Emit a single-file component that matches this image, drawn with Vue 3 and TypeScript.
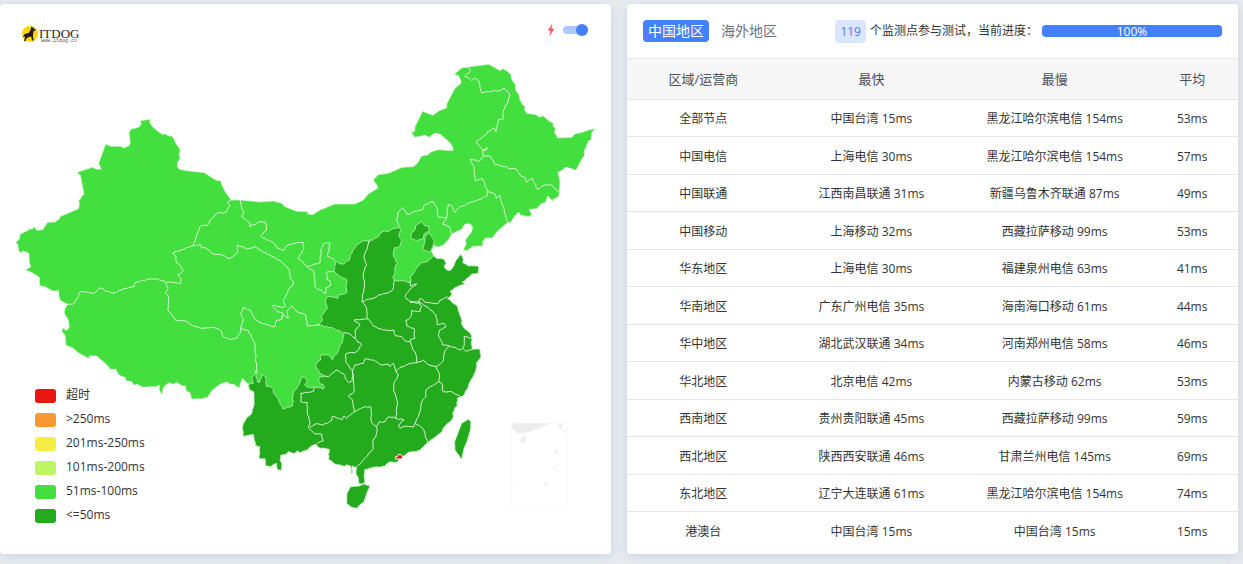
<script setup lang="ts">
import { ref } from 'vue'

interface ResultRow {
  region: string
  fastest: string
  slowest: string
  average: string
}

const autoRefresh = ref(true)
const scope = ref<'cn' | 'intl'>('cn')
const nodeCount = 119
const progress = 100

const legend = [
  { label: '超时', tone: 'timeout' },
  { label: '>250ms', tone: 'slowest' },
  { label: '201ms-250ms', tone: 'slow' },
  { label: '101ms-200ms', tone: 'medium' },
  { label: '51ms-100ms', tone: 'fast' },
  { label: '<=50ms', tone: 'fastest' },
]

const rows: ResultRow[] = [
  { region: '全部节点', fastest: '中国台湾 15ms', slowest: '黑龙江哈尔滨电信 154ms', average: '53ms' },
  { region: '中国电信', fastest: '上海电信 30ms', slowest: '黑龙江哈尔滨电信 154ms', average: '57ms' },
  { region: '中国联通', fastest: '江西南昌联通 31ms', slowest: '新疆乌鲁木齐联通 87ms', average: '49ms' },
  { region: '中国移动', fastest: '上海移动 32ms', slowest: '西藏拉萨移动 99ms', average: '53ms' },
  { region: '华东地区', fastest: '上海电信 30ms', slowest: '福建泉州电信 63ms', average: '41ms' },
  { region: '华南地区', fastest: '广东广州电信 35ms', slowest: '海南海口移动 61ms', average: '44ms' },
  { region: '华中地区', fastest: '湖北武汉联通 34ms', slowest: '河南郑州电信 58ms', average: '46ms' },
  { region: '华北地区', fastest: '北京电信 42ms', slowest: '内蒙古移动 62ms', average: '53ms' },
  { region: '西南地区', fastest: '贵州贵阳联通 45ms', slowest: '西藏拉萨移动 99ms', average: '59ms' },
  { region: '西北地区', fastest: '陕西西安联通 46ms', slowest: '甘肃兰州电信 145ms', average: '69ms' },
  { region: '东北地区', fastest: '辽宁大连联通 61ms', slowest: '黑龙江哈尔滨电信 154ms', average: '74ms' },
  { region: '港澳台', fastest: '中国台湾 15ms', slowest: '中国台湾 15ms', average: '15ms' },
]

// Outer boundary, clockwise from the south-west of Tibet to the Bohai coast.
const northBoundary =
  '742,1150 727,1135 722,1150 718,1165 700,1152 692,1153 680,1146 660,1153 635,1172 623,1192 605,1196 575,1197 570,1178 558,1172 557,1158 545,1157 530,1147 520,1153 506,1148 490,1162 486,1184 478,1170 479,1155 468,1160 450,1160 430,1162 410,1152 402,1156 395,1145 378,1142 376,1132 366,1130 354,1122 348,1108 332,1108 320,1094 290,1068 270,1067 265,1075 235,1058 220,1045 198,1036 195,1005 186,995 188,983 200,992 208,982 205,960 193,940 195,925 203,913 182,902 177,890 176,872 158,873 135,860 119,857 118,832 108,826 100,820 84,813 76,810 93,800 88,790 87,760 70,753 62,758 56,752 54,735 48,727 58,718 60,703 88,689 85,685 95,688 104,681 110,691 128,689 143,667 165,666 178,657 180,650 236,626 238,612 236,603 245,592 245,588 252,583 242,530 242,527 231,517 278,502 289,508 304,507 296,490 317,433 333,439 362,439 371,444 387,437 391,430 387,397 394,387 416,382 424,372 421,362 451,358 449,366 457,380 475,395 487,403 499,402 504,408 514,408 522,416 528,431 539,446 541,455 537,463 541,474 533,487 532,500 539,508 560,512 613,518 648,541 663,543 664,551 676,576 693,600 720,600 780,606 820,603 845,610 855,620 890,634 922,635 924,642 938,644 960,630 1005,612 1065,612 1090,600 1105,582 1134,564 1130,554 1120,540 1135,524 1165,520 1200,505 1208,502 1240,500 1252,490 1264,469 1285,464 1292,456 1315,449 1358,452 1360,447 1352,430 1320,402 1303,400 1288,412 1275,406 1245,412 1234,398 1244,394 1245,380 1268,334 1298,346 1320,331 1340,324 1341,310 1365,265 1383,250 1383,243 1376,227 1363,223 1385,204 1405,201 1467,193 1500,212 1507,206 1520,212 1532,223 1536,240 1546,254 1547,270 1558,287 1560,300 1568,315 1575,318 1574,330 1580,340 1608,344 1618,352 1629,347 1647,363 1660,370 1659,378 1666,386 1664,397 1673,414 1716,412 1724,402 1750,396 1765,390 1787,386 1776,396 1774,418 1765,424 1752,456 1754,466 1746,476 1728,511 1698,501 1687,510 1674,517 1680,545 1678,580 1676,590 1658,599 1660,606 1650,595 1643,588 1636,608 1625,610 1610,626 1587,628 1595,642 1590,650 1562,646 1556,636 1545,647 1533,666 1522,668 1490,696 1477,714 1456,714 1448,725 1449,738 1420,739 1400,752 1390,750 1394,742 1399,732 1396,720 1415,695 1418,680 1410,671 1394,673 1385,688 1355,702 1345,720 1330,735 1315,741 1302,737 1295,753'

// Coast and southern border, from the Yellow River delta round to Yunnan.
const southBoundary =
  '1301,768 1312,776 1332,778 1338,790 1332,800 1345,812 1353,810 1365,788 1382,764 1390,778 1388,788 1405,798 1432,798 1436,802 1434,820 1415,822 1405,832 1386,846 1395,852 1380,856 1350,874 1356,882 1342,896 1370,916 1378,940 1388,978 1402,992 1414,1006 1416,1048 1440,1048 1443,1070 1428,1092 1431,1098 1424,1118 1418,1132 1410,1145 1405,1160 1388,1188 1372,1194 1370,1210 1372,1216 1364,1224 1358,1238 1360,1250 1355,1260 1340,1272 1320,1300 1300,1315 1282,1330 1265,1344 1260,1350 1225,1357 1205,1370 1190,1387 1170,1385 1155,1398 1115,1403 1094,1408 1092,1425 1094,1448 1078,1452 1076,1438 1068,1422 1070,1402 1056,1398 1056,1420 1053,1420 1052,1398 1040,1394 1033,1399 1006,1393 986,1378 988,1348 955,1342 948,1332 930,1340 922,1350 912,1352 900,1358 893,1352 883,1360 865,1354 860,1362 842,1366 840,1380 846,1392 845,1410 833,1410 830,1390 812,1400 798,1398 795,1376 777,1375 780,1340 766,1335 760,1303 730,1310 728,1280 738,1258 756,1238 761,1220 761,1175 750,1170 746,1152'

// Northern edge of the fast provinces, from Shandong west and down to Yunnan.
const fastEdge =
  '1282,785 1260,792 1245,812 1230,830 1232,848 1200,842 1183,840 1178,832 1185,815 1188,795 1192,790 1180,760 1184,743 1200,738 1205,720 1196,705 1203,690 1196,682 1170,692 1142,698 1136,710 1118,722 1110,718 1108,728 1094,722 1085,723 1072,732 1050,765 1048,780 1030,792 1005,784 1002,814 1040,838 1040,878 1017,885 1013,896 982,890 976,902 982,925 970,942 964,946 968,960 950,974 995,982 1032,1000 1028,1025 1018,1045 1006,1065 998,1080 985,1065 960,1067 962,1080 947,1095 958,1118 975,1128 960,1130 956,1145 974,1162 968,1168 945,1160 920,1160 914,1155 922,1140 905,1130 900,1145 880,1180 877,1218 850,1228 840,1210 815,1162 800,1160 798,1135 785,1123 778,1148 771,1145 768,1110 756,1138 760,1150'

function roughen(points: string, strength: number): string {
  const source = points.split(' ').map((pair) => pair.split(',').map(Number))
  const result: string[] = []
  source.forEach(([x, y], index) => {
    result.push(`${x},${y}`)
    const next = source[index + 1]
    if (!next) return
    const dx = next[0] - x
    const dy = next[1] - y
    const length = Math.hypot(dx, dy)
    const steps = Math.floor(length / 7)
    for (let step = 1; step < steps; step += 1) {
      const seed = Math.sin(x * 12.9898 + y * 78.233 + step * 37.719) * 43758.5453
      const shift = (seed - Math.floor(seed) - 0.5) * 2 * strength
      const px = x + (dx * step) / steps - (dy / length) * shift
      const py = y + (dy * step) / steps + (dx / length) * shift
      result.push(`${px.toFixed(1)},${py.toFixed(1)}`)
    }
  })
  return result.join(' ')
}

const reversed = (points: string) => points.split(' ').reverse().join(' ')
const coast = roughen(southBoundary, 2)
const country = `${northBoundary} ${coast}`
const fastArea = `${coast} ${reversed(roughen(fastEdge, 3))}`

const fastIslands = [
  '1265,665 1275,678 1285,678 1288,692 1272,702 1270,715 1250,722 1232,715 1235,698 1245,690 1248,675',
  '1288,698 1295,710 1303,722 1298,740 1290,757 1268,748 1275,725 1275,710',
  '1052,1460 1078,1458 1090,1452 1110,1458 1100,1480 1092,1505 1080,1514 1070,1525 1055,1522 1040,1510 1041,1480',
  '1405,1258 1413,1265 1411,1290 1401,1325 1392,1345 1385,1378 1365,1350 1364,1325 1385,1270',
]

const borders = [
  '693,600 682,607 690,618 680,635 665,640 658,636 635,655 622,676 600,679 595,695 580,735',
  '580,737 518,760 528,768 528,783 550,812 532,825 542,835 541,852 512,845 500,848 488,842 470,836 440,838 405,848 402,860 372,866 348,878 318,875 308,865 298,864 280,881 241,875 224,910 203,913',
  '498,850 505,865 497,880 506,890 503,928 525,960 555,962 570,973 610,985 630,983 650,985 665,995 668,1008 688,1018 710,1015 720,1000 723,982',
  '580,737 601,734 605,744 615,742 640,762 665,765 690,775 700,768 713,755 712,735 742,747 765,740 785,752 810,765 850,790 868,810 870,830 880,850 863,875 850,900 857,918 850,922 818,916 832,935 850,940 845,958 830,960 825,980 815,980 785,970 768,960 750,930 730,922 722,940 730,958 722,985',
  '845,958 848,944 865,955 860,935 875,918 890,935 915,943 922,978 960,974',
  '720,600 732,640 725,648 750,670 750,680 780,665 795,665 800,690 782,708 820,728 832,745 850,752 860,738 885,730 910,727 912,745 893,775 922,800',
  '922,800 960,787 962,750 975,728 990,730 982,768 1005,780',
  '922,800 943,815 945,860 977,880 978,865 990,858 990,842 980,838 982,815 1002,814',
  '722,985 745,992 762,1025 768,1070 771,1120',
  '1110,720 1100,750 1092,770 1100,795 1090,820 1094,860 1085,905 1120,895 1135,885 1160,880 1178,870 1183,840',
  '1088,908 1100,925 1102,955 1120,978 1150,990 1182,990 1184,1005 1205,1010 1215,1022 1230,1025 1232,1018 1245,1015 1242,985 1220,978 1217,962 1232,952 1235,932 1260,935 1265,920 1255,910 1230,905 1215,890 1232,865 1250,852 1232,858 1230,845',
  '1102,958 1062,960 1080,975 1065,990 1065,1015 1085,1035 1070,1055 1037,1062 1037,1085 1057,1112',
  '1032,998 1050,1002 1065,1015',
  '1058,1110 1065,1095 1090,1090 1095,1077 1120,1080 1145,1095 1165,1092 1170,1100 1180,1090 1188,1115 1200,1102 1225,1092 1250,1088 1248,1065 1236,1040 1232,1025',
  '1250,1088 1270,1080 1282,1092 1308,1100 1328,1085 1332,1060 1348,1038 1328,1035 1315,1005 1318,990 1338,980 1332,970 1312,975 1308,945 1285,922 1265,910 1250,905 1230,908',
  '1258,910 1260,895 1280,908 1315,910 1320,900 1342,890',
  '1348,1038 1365,1042 1382,1050 1392,1038 1392,1010 1416,1015',
  '1388,1045 1398,1054 1418,1048',
  '1308,1100 1318,1120 1316,1145 1325,1150 1330,1175 1355,1175 1365,1182 1380,1188',
  '1316,1145 1290,1160 1278,1170 1278,1190 1265,1205 1260,1235 1245,1270 1265,1282 1275,1300 1282,1328',
  '1245,1270 1240,1282 1218,1278 1200,1285 1195,1275 1212,1260 1188,1255',
  '1188,1115 1195,1125 1182,1150 1182,1175 1192,1205 1188,1255 1165,1250 1155,1265 1138,1265 1130,1280 1115,1268 1112,1220 1095,1220 1062,1235',
  '1062,1235 1058,1200 1045,1188 1062,1175 1058,1110',
  '1064,1235 1040,1255 1032,1248 1025,1260 998,1248 995,1262 970,1275 945,1272 930,1282',
  '925,1282 930,1270 922,1240 922,1208 902,1205 902,1180 940,1175 943,1162',
  '925,1282 945,1302 965,1302 970,1322 952,1330',
  '975,1128 985,1130 1008,1110 1030,1120 1045,1148 1057,1142 1058,1110',
  '1130,1280 1130,1300 1118,1325 1120,1345 1102,1368 1070,1400',
  '1405,202 1412,213 1394,228 1415,242 1422,234 1436,242 1444,278 1465,275 1500,272 1512,265 1530,285 1524,305 1510,330 1508,358 1496,358 1488,395 1482,383 1428,425 1448,450 1462,442 1460,450 1448,452 1450,468',
  '1450,468 1472,470 1485,495 1520,500 1526,507 1550,507 1562,528 1575,532 1580,547 1598,535 1612,568 1640,553 1655,555 1678,575',
  '1450,468 1435,485 1410,477 1422,505 1426,543 1448,535 1462,575 1485,582 1490,595 1498,586 1512,625 1522,665',
  '1462,575 1462,588 1440,598 1420,605 1380,620 1365,637 1355,617 1345,613 1340,652 1328,672 1348,680 1355,702',
  '1340,652 1315,652 1312,625 1300,605 1272,615 1270,627 1220,643 1210,623 1195,635 1190,660 1198,680',
].map((line) => roughen(line, 2))
</script>

<template>
  <main class="page">
    <section class="card map-card" aria-label="延迟地图">
      <svg class="map" viewBox="0 12 1833 1650" aria-hidden="true">
        <polygon class="land normal" :points="country" />
        <polygon class="land quick" :points="fastArea" />
        <polygon v-for="shape in fastIslands" :key="shape" class="land quick" :points="shape" />
        <polyline v-for="line in borders" :key="line" class="border" :points="line" />
        <polygon class="hotspot" points="1187,1377 1187,1370 1193,1369 1196,1363 1203,1364 1208,1371 1206,1377" />
        <rect class="inset-frame" x="1532" y="1270" width="170" height="250" />
        <g class="inset">
          <polygon points="1534,1278 1542,1270 1650,1270 1600,1291 1570,1299 1552,1299 1540,1288" />
          <polygon points="1673,1272 1687,1272 1686,1280 1683,1290 1679,1280" />
          <polygon points="1567,1311 1580,1310 1571,1328 1561,1328" />
          <polygon points="1692,1290 1697,1292 1690,1302" />
          <polygon points="1667,1348 1672,1347 1672,1360 1667,1362" />
          <polygon points="1671,1392 1673,1392 1663,1408 1660,1406" />
          <polygon points="1641,1442 1643,1444 1634,1458 1631,1457" />
          <path d="M1565 1355l3 10M1574 1398l-8 12M1549 1442l3 12M1594 1491l7-3" />
        </g>
      </svg>

      <header class="map-header">
        <svg class="logo" viewBox="0 0 60 20" role="img" aria-label="ITDOG">
          <circle cx="8" cy="10" r="8" fill="#ffd400" />
          <path
            d="M9.300 2.300l1 1.400 1.100-.9.300 1.900 2 .8-.3 1-1.800.5-.5 2.200-.2 3 .8 4.300h-1.500l-1-4-3.300.7-1.900 1.800-.5 2.200H2l.7-2.800.2-2.500-1 1-.9.200 1.600-3 4.400-1.300 1.700-3z"
            fill="#211714"
          />
          <text class="logo-name" x="17" y="14">ITDOG</text>
          <text class="logo-url" x="19" y="18">www.itdog.cn</text>
        </svg>
        <label class="refresh">
          <svg class="bolt" viewBox="0 0 8 14" role="img" aria-label="快速刷新">
            <path d="M5.300.5L.8 7.500h2.700L2.300 13.500 7.300 5.800H4.400z" fill="#ff5450" />
          </svg>
          <input v-model="autoRefresh" class="switch" type="checkbox" />
        </label>
      </header>

      <ul class="legend">
        <li v-for="item in legend" :key="item.label">
          <span class="swatch" :class="item.tone"></span>
          <span class="legend-label">{{ item.label }}</span>
        </li>
      </ul>
    </section>

    <section class="card result-card">
      <header class="result-header">
        <nav class="tabs">
          <button type="button" :class="{ active: scope === 'cn' }" @click="scope = 'cn'">中国地区</button>
          <button type="button" :class="{ active: scope === 'intl' }" @click="scope = 'intl'">海外地区</button>
        </nav>
        <div class="status">
          <span class="count">{{ nodeCount }}</span>
          <span class="hint">个监测点参与测试，当前进度：</span>
          <div class="progress" role="progressbar" :aria-valuenow="progress">
            <div class="bar" :style="{ width: progress + '%' }">{{ progress }}%</div>
          </div>
        </div>
      </header>
      <table>
        <thead>
          <tr>
            <th class="col-region" scope="col">区域/运营商</th>
            <th class="col-node" scope="col">最快</th>
            <th class="col-node" scope="col">最慢</th>
            <th class="col-average" scope="col">平均</th>
          </tr>
        </thead>
        <tbody>
          <tr v-for="row in rows" :key="row.region">
            <td>{{ row.region }}</td>
            <td>{{ row.fastest }}</td>
            <td>{{ row.slowest }}</td>
            <td>{{ row.average }}</td>
          </tr>
        </tbody>
      </table>
    </section>
  </main>
</template>

<style>
body {
  margin: 0;
  background: #e8ecf1;
}
</style>

<style scoped>
.page {
  box-sizing: border-box;
  display: grid;
  grid-template-columns: 1fr 1fr;
  gap: 16px;
  align-items: start;
  padding: 4px 5px 10px 0;
  font-family: "Open Sans", "Noto Sans CJK SC", sans-serif;
  font-size: 12px;
  line-height: 18px;
  color: #333;
}

.card {
  background: #fff;
  border-radius: 4px;
  box-shadow: 0 2px 12px rgba(90, 110, 140, 0.2);
  overflow: hidden;
}

.map-card {
  position: relative;
}

.map {
  display: block;
  width: 100%;
}

.land {
  stroke: #d6f3d2;
  stroke-width: 2;
  stroke-linejoin: round;
}

.normal {
  fill: #43df3e;
}

.quick {
  fill: #24aa1d;
}

.border {
  fill: none;
  stroke: #d6f3d2;
  stroke-width: 3;
  stroke-linejoin: round;
}

.hotspot {
  fill: #ea1610;
  stroke: #fff;
  stroke-width: 3;
}

.inset-frame {
  fill: none;
  stroke: #f8f8f8;
  stroke-width: 3;
}

.inset {
  fill: #ececec;
  stroke: #f0f0f0;
  stroke-width: 1;
}

.map-header {
  position: absolute;
  inset: 0 0 auto;
  display: flex;
  justify-content: space-between;
  padding: 20px 23px 0 22px;
}

.logo {
  width: 60px;
  height: 20px;
}

.logo-name {
  font-family: "Liberation Serif", serif;
  font-size: 13px;
  fill: #2b2320;
}

.logo-url {
  font-family: "Liberation Mono", monospace;
  font-size: 5px;
  fill: #5b5350;
}

.refresh {
  display: flex;
  align-items: center;
  gap: 8px;
  height: 12px;
}

.bolt {
  width: 8px;
  height: 14px;
}

.switch {
  appearance: none;
  display: flex;
  align-items: center;
  width: 25px;
  height: 8px;
  margin: 0;
  border-radius: 4px;
  background: #d5d9df;
  cursor: pointer;
}

.switch::before {
  content: "";
  width: 12px;
  height: 12px;
  border-radius: 50%;
  background: #fff;
}

.switch:checked {
  justify-content: flex-end;
  background: #adc7ff;
}

.switch:checked::before {
  background: #467fff;
}

.legend {
  position: absolute;
  left: 35px;
  bottom: 26px;
  display: grid;
  margin: 0;
  padding: 0;
  list-style: none;
}

.legend li {
  display: flex;
  align-items: center;
  gap: 10px;
  height: 24px;
}

.legend-label {
  padding-bottom: 2px;
}

.swatch {
  width: 21px;
  height: 14px;
  border-radius: 3px;
}

.timeout { background: #ea1610; }
.slowest { background: #f89832; }
.slow { background: #f6ed44; }
.medium { background: #bef663; }
.fast { background: #43df3e; }
.fastest { background: #24aa1d; }

.result-card {
  align-self: stretch;
}

.result-header {
  box-sizing: border-box;
  display: flex;
  align-items: center;
  justify-content: space-between;
  height: 54px;
  padding: 0 16px;
}

.tabs {
  display: flex;
  gap: 7px;
}

.tabs button {
  padding: 0 5px;
  border: 0;
  border-radius: 4px;
  background: transparent;
  color: #6c757d;
  font-family: inherit;
  font-size: 14px;
  line-height: 22px;
  cursor: pointer;
}

.tabs .active {
  background: #467fff;
  color: #fff;
}

.status {
  display: flex;
  align-items: center;
}

.count {
  padding: 0 5px;
  border-radius: 4px;
  background: #dae5ff;
  color: #467fff;
  line-height: 23px;
}

.hint {
  margin: 0 4px;
}

.progress {
  width: 180px;
  height: 12px;
  border-radius: 4px;
  background: #e9ecef;
}

.bar {
  height: 12px;
  border-radius: 4px;
  background: #467fff;
  color: #fff;
  font-size: 12px;
  line-height: 14px;
  text-align: center;
}

table {
  width: 100%;
  table-layout: fixed;
  border-collapse: separate;
  border-spacing: 0;
  text-align: center;
}

th,
td {
  box-sizing: border-box;
  height: 37px;
  padding: 0;
  border-top: 1px solid #e1e7ec;
}

td {
  padding-top: 2px;
}

th {
  height: 41px;
  background: #f7f7f7;
  color: #495057;
  font-size: 13px;
  font-weight: 400;
}

tbody tr:nth-child(even) td {
  height: 38px;
}

.col-region { width: 25%; }
.col-node { width: 30%; }
.col-average { width: 15%; }
</style>
